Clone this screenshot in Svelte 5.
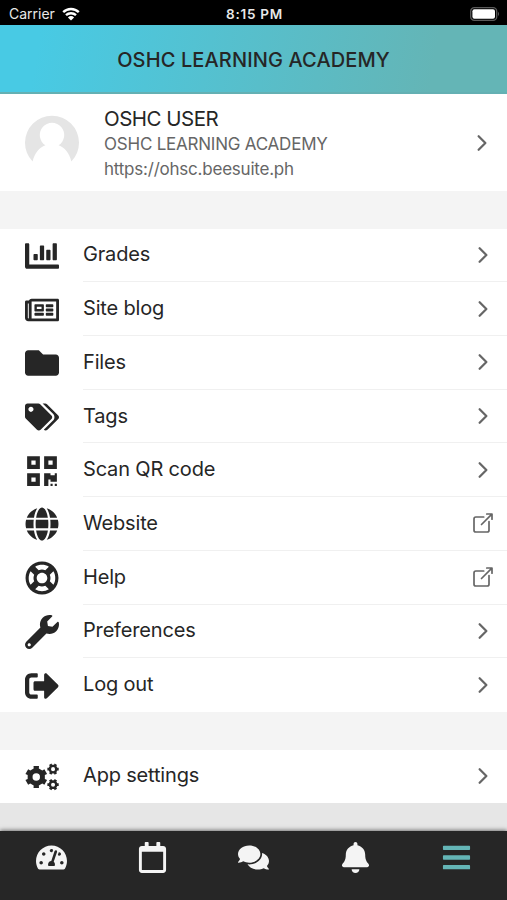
<script lang="ts">
    type Glyph = { w: number, d: string };

    // Each glyph is drawn on a w x 512 grid
    const glyphs: Record<string, Glyph> = {
        chart: { w: 512, d: 'M332.8 320h38.4c6.4 0 12.8-6.4 12.8-12.8V172.8c0-6.4-6.4-12.8-12.8-12.8h-38.4c-6.4 0-12.8 6.4-12.8 12.8v134.4c0 6.4 6.4 12.8 12.8 12.8zm96 0h38.4c6.4 0 12.8-6.4 12.8-12.8V76.8c0-6.4-6.4-12.8-12.8-12.8h-38.4c-6.4 0-12.8 6.4-12.8 12.8v230.4c0 6.4 6.4 12.8 12.8 12.8zm-288 0h38.4c6.4 0 12.8-6.4 12.8-12.8v-70.4c0-6.4-6.4-12.8-12.8-12.8h-38.4c-6.4 0-12.8 6.4-12.8 12.8v70.4c0 6.4 6.4 12.8 12.8 12.8zm96 0h38.4c6.4 0 12.8-6.4 12.8-12.8V108.8c0-6.4-6.4-12.8-12.8-12.8h-38.4c-6.4 0-12.8 6.4-12.8 12.8v198.4c0 6.4 6.4 12.8 12.8 12.8zM496 384H64V80c0-8.84-7.16-16-16-16H16C7.16 64 0 71.16 0 80v336c0 17.67 14.33 32 32 32h464c8.84 0 16-7.16 16-16v-32c0-8.84-7.16-16-16-16z' },
        newspaper: { w: 576, d: 'M552 64H112c-20.858 0-38.643 13.377-45.248 32H24c-13.255 0-24 10.745-24 24v272c0 30.928 25.072 56 56 56h496c13.255 0 24-10.745 24-24V88c0-13.255-10.745-24-24-24zM48 392V144h16v248c0 4.411-3.589 8-8 8s-8-3.589-8-8zm480 8H111.422c.374-2.614.578-5.283.578-8V112h416v288zM172 280h136c6.627 0 12-5.373 12-12v-96c0-6.627-5.373-12-12-12H172c-6.627 0-12 5.373-12 12v96c0 6.627 5.373 12 12 12zm28-80h80v40h-80v-40zm-40 140v-24c0-6.627 5.373-12 12-12h136c6.627 0 12 5.373 12 12v24c0 6.627-5.373 12-12 12H172c-6.627 0-12-5.373-12-12zm192 0v-24c0-6.627 5.373-12 12-12h104c6.627 0 12 5.373 12 12v24c0 6.627-5.373 12-12 12H364c-6.627 0-12-5.373-12-12zm0-144v-24c0-6.627 5.373-12 12-12h104c6.627 0 12 5.373 12 12v24c0 6.627-5.373 12-12 12H364c-6.627 0-12-5.373-12-12zm0 72v-24c0-6.627 5.373-12 12-12h104c6.627 0 12 5.373 12 12v24c0 6.627-5.373 12-12 12H364c-6.627 0-12-5.373-12-12z' },
        folder: { w: 512, d: 'M464 128H272l-64-64H48C21.49 64 0 85.49 0 112v288c0 26.51 21.49 48 48 48h416c26.51 0 48-21.49 48-48V176c0-26.51-21.49-48-48-48z' },
        tags: { w: 640, d: 'M497.941 225.941L286.059 14.059A48 48 0 0 0 252.118 0H48C21.49 0 0 21.49 0 48v204.118a48 48 0 0 0 14.059 33.941l211.882 211.882c18.744 18.745 49.136 18.746 67.882 0l204.118-204.118c18.745-18.745 18.745-49.137 0-67.882zM112 160c-26.51 0-48-21.49-48-48s21.49-48 48-48 48 21.49 48 48-21.49 48-48 48zm513.941 133.823L421.823 497.941c-18.745 18.745-49.137 18.745-67.882 0l-.36-.36L527.64 323.522c16.999-16.999 26.362-39.6 26.362-63.64s-9.362-46.641-26.362-63.64L331.397 0h48.721a48 48 0 0 1 33.941 14.059l211.882 211.882c18.745 18.745 18.745 49.137 0 67.882z' },
        qrcode: { w: 448, d: 'M0 224h192V32H0v192zM64 96h64v64H64V96zm192-64v192h192V32H256zm128 128h-64V96h64v64zM0 480h192V288H0v192zm64-128h64v64H64v-64zm352-64h32v128h-96v-32h-32v96h-64V288h96v32h64v-32zm0 160h32v32h-32v-32zm-64 0h32v32h-32v-32z' },
        globe: { w: 496, d: 'M336.5 160C322 70.7 287.8 8 248 8s-74 62.7-88.5 152h177zM152 256c0 22.2 1.2 43.5 3.3 64h185.3c2.1-20.5 3.3-41.8 3.3-64s-1.2-43.5-3.3-64H155.3c-2.1 20.5-3.3 41.8-3.3 64zm324.7-96c-28.6-67.9-86.5-120.4-158-141.6 24.4 33.8 41.2 84.7 50 141.6h108zM177.2 18.4C105.8 39.6 47.8 92.1 19.3 160h108c8.7-56.9 25.5-107.8 49.9-141.6zM487.4 192H372.7c2.1 21 3.3 42.5 3.3 64s-1.2 43-3.3 64h114.6c5.5-20.5 8.6-41.8 8.6-64s-3.1-43.5-8.5-64zM120 256c0-21.5 1.2-43 3.3-64H8.6C3.2 212.5 0 233.8 0 256s3.2 43.5 8.6 64h114.6c-2-21-3.2-42.5-3.2-64zm39.5 96c14.5 89.3 48.7 152 88.5 152s74-62.7 88.5-152h-177zm159.3 141.6c71.4-21.2 129.4-73.7 158-141.6h-108c-8.8 56.9-25.6 107.8-50 141.6zM19.3 352c28.6 67.9 86.5 120.4 158 141.6-24.4-33.8-41.2-84.7-50-141.6h-108z' },
        ring: { w: 512, d: 'M256 504c136.967 0 248-111.033 248-248S392.967 8 256 8 8 119.033 8 256s111.033 248 248 248zm-103.398-76.72l53.411-53.411c31.806 13.506 68.128 13.522 99.974 0l53.411 53.411c-63.217 38.319-143.579 38.319-206.796 0zM336 256c0 44.112-35.888 80-80 80s-80-35.888-80-80 35.888-80 80-80 80 35.888 80 80zm91.28 103.398l-53.411-53.411c13.505-31.806 13.522-68.128 0-99.974l53.411-53.411c38.319 63.217 38.319 143.579 0 206.796zM359.397 84.72l-53.411 53.411c-31.806-13.505-68.128-13.522-99.973 0L152.602 84.72c63.217-38.319 143.579-38.319 206.795 0zM84.72 152.602l53.411 53.411c-13.506 31.806-13.522 68.128 0 99.974L84.72 359.398c-38.319-63.217-38.319-143.579 0-206.796z' },
        wrench: { w: 512, d: 'M507.73 109.1c-2.24-9.03-13.54-12.09-20.12-5.51l-74.36 74.36-67.88-11.31-11.31-67.88 74.36-74.36c6.62-6.62 3.43-17.9-5.66-20.16-47.38-11.74-99.55.91-136.58 37.93-39.64 39.64-50.55 97.1-34.05 147.2L18.74 402.76c-24.99 24.99-24.99 65.51 0 90.5 24.99 24.99 65.51 24.99 90.5 0l213.21-213.21c50.12 16.71 107.47 5.68 147.37-34.22 37.07-37.07 49.7-89.32 37.91-136.73zM64 472c-13.25 0-24-10.75-24-24 0-13.26 10.75-24 24-24s24 10.74 24 24c0 13.25-10.75 24-24 24z' },
        signout: { w: 512, d: 'M497 273L329 441c-15 15-41 4.5-41-17v-96H152c-13.3 0-24-10.7-24-24v-96c0-13.3 10.7-24 24-24h136V88c0-21.4 25.9-32 41-17l168 168c9.3 9.4 9.3 24.6 0 34zM192 436v-40c0-6.6-5.4-12-12-12H96c-17.7 0-32-14.3-32-32V160c0-17.7 14.3-32 32-32h84c6.6 0 12-5.4 12-12V76c0-6.6-5.4-12-12-12H96c-53 0-96 43-96 96v192c0 53 43 96 96 96h84c6.6 0 12-5.4 12-12z' },
        cogs: { w: 640, d: gear(212, 256, 212, 166, 70, 0) + gear(528, 108, 110, 84, 38, 30) + gear(528, 400, 110, 84, 38, 30) },
        dashboard: { w: 576, d: 'M288 32C128.94 32 0 160.94 0 320c0 52.8 14.25 102.26 39.06 144.8 5.61 9.62 16.3 15.2 27.44 15.2h443c11.14 0 21.83-5.58 27.44-15.2C561.75 422.26 576 372.8 576 320c0-159.06-128.94-288-288-288zm0 64c14.71 0 26.58 10.13 30.32 23.65-1.11 2.26-2.64 4.23-3.45 6.67l-9.22 27.67c-5.13 3.49-10.97 6.01-17.64 6.01-17.67 0-32-14.33-32-32S270.33 96 288 96zM96 384c-17.67 0-32-14.33-32-32s14.33-32 32-32 32 14.33 32 32-14.33 32-32 32zm48-160c-17.67 0-32-14.33-32-32s14.33-32 32-32 32 14.33 32 32-14.33 32-32 32zm246.77-72.41l-61.33 184C343.13 347.33 352 364.54 352 384c0 11.72-3.38 22.55-8.88 32H232.88c-5.5-9.45-8.88-20.28-8.88-32 0-33.94 26.5-61.43 59.9-63.59l61.34-184.01c4.17-12.56 17.73-19.45 30.36-15.17 12.57 4.19 19.35 17.79 15.17 30.36zm14.66 57.2l15.52-46.55c3.47-1.29 7.13-2.23 11.05-2.23 17.67 0 32 14.33 32 32s-14.33 32-32 32c-11.38-.01-20.89-6.28-26.57-15.22zM480 384c-17.67 0-32-14.33-32-32s14.33-32 32-32 32 14.33 32 32-14.33 32-32 32z' },
        calendar: { w: 448, d: 'M400 64h-48V12c0-6.6-5.4-12-12-12h-40c-6.6 0-12 5.4-12 12v52H160V12c0-6.6-5.4-12-12-12h-40c-6.6 0-12 5.4-12 12v52H48C21.5 64 0 85.5 0 112v352c0 26.5 21.5 48 48 48h352c26.5 0 48-21.5 48-48V112c0-26.5-21.5-48-48-48zm-6 400H54c-3.3 0-6-2.7-6-6V160h352v298c0 3.3-2.7 6-6 6z' },
        comments: { w: 576, d: 'M416 192c0-88.4-93.1-160-208-160S0 103.6 0 192c0 34.3 14.1 65.9 38 92-13.4 30.2-35.5 54.2-35.8 54.5-2.2 2.3-2.8 5.7-1.5 8.7S4.8 352 8 352c36.6 0 66.9-12.3 88.7-25 32.2 15.7 70.3 25 111.3 25 114.9 0 208-71.6 208-160zm122 220c23.9-26 38-57.7 38-92 0-66.9-53.5-124.2-129.3-148.1.9 6.6 1.3 13.3 1.3 20.1 0 105.9-107.7 192-240 192-10.8 0-21.3-.8-31.7-1.9C207.8 439.6 281.8 480 368 480c41 0 79.1-9.2 111.3-25 21.8 12.7 52.1 25 88.7 25 3.2 0 6.1-1.9 7.3-4.8 1.3-2.9.7-6.3-1.5-8.7-.3-.2-22.4-24.2-35.8-54.5z' },
        bell: { w: 448, d: 'M224 512c35.32 0 63.97-28.65 63.97-64H160.03c0 35.35 28.65 64 63.97 64zm215.39-149.71c-19.32-20.76-55.47-51.99-55.47-154.29 0-77.7-54.48-139.9-127.94-155.16V32c0-17.67-14.32-32-31.98-32s-31.98 14.33-31.98 32v20.84C118.56 68.1 64.08 130.3 64.08 208c0 102.3-36.15 133.53-55.47 154.29-6 6.45-8.66 14.16-8.61 21.71.11 16.4 12.98 32 32.1 32h383.8c19.12 0 32-15.6 32.1-32 .05-7.55-2.61-15.27-8.61-21.71z' },
        bars: { w: 448, d: 'M16 132h416c8.837 0 16-7.163 16-16V76c0-8.837-7.163-16-16-16H16C7.163 60 0 67.163 0 76v40c0 8.837 7.163 16 16 16zm0 160h416c8.837 0 16-7.163 16-16v-40c0-8.837-7.163-16-16-16H16c-8.837 0-16 7.163-16 16v40c0 8.837 7.163 16 16 16zm0 160h416c8.837 0 16-7.163 16-16v-40c0-8.837-7.163-16-16-16H16c-8.837 0-16 7.163-16 16v40c0 8.837 7.163 16 16 16z' },
    };

    function gear(cx: number, cy: number, outer: number, inner: number, hole: number, turn: number): string {
        const points: string[] = [];
        for (let i = 0; i < 6; i++) {
            for (const [offset, r] of [[-17, inner], [-14, outer], [14, outer], [17, inner]]) {
                const a = (i * 60 + offset + turn - 90) * Math.PI / 180;
                points.push(`${(cx + r * Math.cos(a)).toFixed(1)} ${(cy + r * Math.sin(a)).toFixed(1)}`);
            }
        }
        return `M${points.join('L')}ZM${cx - hole} ${cy}a${hole} ${hole} 0 1 0 ${hole * 2} 0a${hole} ${hole} 0 1 0 ${-hole * 2} 0Z`;
    }

    const items = [
        { icon: 'chart', label: 'Grades' },
        { icon: 'newspaper', label: 'Site blog' },
        { icon: 'folder', label: 'Files' },
        { icon: 'tags', label: 'Tags' },
        { icon: 'qrcode', label: 'Scan QR code' },
        { icon: 'globe', label: 'Website', external: true },
        { icon: 'ring', label: 'Help', external: true },
        { icon: 'wrench', label: 'Preferences' },
        { icon: 'signout', label: 'Log out' },
    ];
    const appItems = [{ icon: 'cogs', label: 'App settings' }];
    const tabs = ['dashboard', 'calendar', 'comments', 'bell', 'bars'];

    let active = $state('bars');
</script>

{#snippet glyph(name)}
    <svg class="glyph" viewBox="0 0 {glyphs[name].w} 512">
        <path fill-rule="evenodd" d={glyphs[name].d} />
    </svg>
{/snippet}

{#snippet detail(external)}
    <svg class="detail" viewBox="0 0 512 512">
        {#if external}
            <path stroke-width="36" d="M384 224v184a40 40 0 01-40 40H104a40 40 0 01-40-40V168a40 40 0 0140-40h167.48M336 64h112v112M224 288L440 72" />
        {:else}
            <path stroke-width="48" d="M184 112l144 144-144 144" />
        {/if}
    </svg>
{/snippet}

{#snippet row(item)}
    <button class="item" type="button">
        {@render glyph(item.icon)}
        <span class="inner">
            <span class="label">{item.label}</span>
            {@render detail(item.external)}
        </span>
    </button>
{/snippet}

<div class="screen">
    <div class="status">
        <div class="carrier">
            <span>Carrier</span>
            <svg class="wifi" viewBox="0 0 18 14">
                <path d="M1.2 5.2a11.2 11.2 0 0 1 15.6 0M4 8.2a7.2 7.2 0 0 1 10 0" />
                <path class="dot" d="M9 13.6L5.9 10.5a4.5 4.5 0 0 1 6.2 0z" />
            </svg>
        </div>
        <div class="clock">8:15 PM</div>
        <svg class="battery" viewBox="0 0 30 14">
            <rect class="shell" x=".7" y=".7" width="26" height="12.6" rx="3.6" />
            <rect x="2.4" y="2.3" width="22.6" height="9.4" rx="2" />
            <path class="tip" d="M28 4.8q2 2.2 0 4.4z" />
        </svg>
    </div>

    <header>OSHC LEARNING ACADEMY</header>

    <main>
        <button class="user" type="button">
            <svg class="avatar" viewBox="0 0 54 54">
                <path d="M7.6 48.5A27 27 0 1 1 46.4 48.5C44.5 40 39.5 34.5 33.6 32.3A12.2 12.2 0 1 0 20.4 32.3C14.5 34.5 9.5 40 7.6 48.5z" />
            </svg>
            <span class="about">
                <span class="name">OSHC USER</span>
                <span class="site">OSHC LEARNING ACADEMY</span>
                <span class="url">https://ohsc.beesuite.ph</span>
            </span>
            {@render detail(false)}
        </button>

        <div class="group">
            {#each items as item}
                {@render row(item)}
            {/each}
        </div>

        <div class="group">
            {#each appItems as item}
                {@render row(item)}
            {/each}
        </div>
    </main>

    <nav>
        {#each tabs as tab}
            <button class="tab" class:active={active === tab} type="button" aria-label={tab} onclick={() => active = tab}>
                {@render glyph(tab)}
            </button>
        {/each}
    </nav>
</div>

<style>
    :global(body) {
        background-color: #e6e6e6;
    }

    button {
        margin: 0;
        padding: 0;
        border: 0;
        background: none;
        color: inherit;
        font: inherit;
        text-align: left;
        cursor: pointer;
    }

    .screen {
        display: flex;
        flex-direction: column;
        width: 507px;
        height: 900px;
        overflow: hidden;
        background-color: #e6e6e6;
        color: #262626;
        font-family: Inter, "Liberation Sans", sans-serif;
    }

    .status {
        display: grid;
        grid-template-columns: 1fr auto 1fr;
        align-items: center;
        height: 25px;
        padding: 2px 7px 0 9px;
        box-sizing: border-box;
        background-color: #000;
        color: #e8e8e8;
        font-size: 14px;
        line-height: 20px;
    }

    .carrier {
        display: flex;
        align-items: center;
        gap: 7px;
    }

    .wifi {
        width: 18px;
        height: 14px;
        fill: none;
        stroke: #fff;
        stroke-width: 2.4;
    }

    .wifi .dot {
        fill: #fff;
        stroke: none;
    }

    .clock {
        font-size: 13.5px;
        font-weight: 600;
        letter-spacing: .75px;
    }

    .battery {
        justify-self: end;
        width: 30px;
        height: 14px;
        fill: #fff;
    }

    .battery .shell {
        fill: none;
        stroke: #5a5a5a;
        stroke-width: 1.3;
    }

    .battery .tip {
        fill: #5a5a5a;
    }

    header {
        height: 69px;
        box-sizing: border-box;
        border-bottom: 2px solid #64b0b3;
        background: linear-gradient(100deg, #48cae4 0%, #48cae4 8%, #64b5b6 85%);
        font-size: 20px;
        font-weight: 500;
        letter-spacing: .12px;
        line-height: 70px;
        text-align: center;
    }

    main {
        display: flex;
        flex-direction: column;
        gap: 37.5px;
        background-color: #f4f4f4;
    }

    .user {
        display: flex;
        align-items: center;
        height: 97px;
        padding: 0 13px 0 25px;
        background-color: #fff;
    }

    .avatar {
        width: 54px;
        height: 54px;
        margin-right: 25px;
        padding-bottom: 6px;
        fill: #e5e5e5;
    }

    .about {
        display: flex;
        flex: 1;
        flex-direction: column;
        padding-top: 2px;
        color: #666;
        font-size: 17px;
        letter-spacing: -.22px;
        line-height: 24.5px;
    }

    .name {
        color: #262626;
        font-size: 20.5px;
        letter-spacing: -.5px;
        line-height: 26px;
    }

    .group {
        display: flex;
        flex-direction: column;
        height: 53px;
        background-color: #fff;
    }

    .group:nth-child(2) {
        height: 483.5px;
    }

    .item {
        display: flex;
        flex: 1;
        align-items: center;
        padding-left: 25px;
    }

    .item .glyph {
        width: 34px;
        height: 34px;
        margin-right: 24px;
        padding-top: 1px;
    }

    .inner {
        display: flex;
        flex: 1;
        align-self: stretch;
        align-items: center;
        padding-right: 12.5px;
        border-bottom: 1px solid #f0f0f0;
    }

    .item:last-child .inner {
        border-bottom-color: transparent;
    }

    .label {
        flex: 1;
        padding-bottom: 1px;
        font-size: 20px;
        letter-spacing: -.17px;
    }

    .glyph {
        fill: currentColor;
    }

    .detail {
        width: 24px;
        height: 24px;
        fill: none;
        stroke: #666;
        stroke-linecap: round;
        stroke-linejoin: round;
    }

    nav {
        display: grid;
        grid-template-columns: repeat(5, 1fr);
        height: 69px;
        margin-top: auto;
        background-color: #262626;
        box-shadow: 0 -1px 4px rgba(0, 0, 0, .5);
        color: #f4f4f4;
    }

    .tab {
        display: flex;
        justify-content: center;
        align-items: flex-start;
        padding: 11px 0 0 .8px;
    }

    .tab .glyph {
        width: 31px;
        height: 31px;
    }

    .tab.active {
        color: #64b5b6;
    }
</style>
